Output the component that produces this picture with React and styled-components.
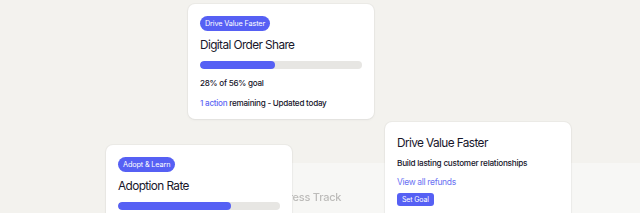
import React from 'react';
import styled, { createGlobalStyle } from 'styled-components';

const GlobalStyle = createGlobalStyle`
  html, body {
    margin: 0;
    padding: 0;
    background: #f3f2ee;
  }
  body {
    font-family: Inter, "Noto Sans", sans-serif;
    color: #1b1a2b;
    -webkit-font-smoothing: antialiased;
  }
`;

const Canvas = styled.div`
  position: relative;
  width: 640px;
  height: 213px;
  overflow: hidden;
  background: #f3f2ee;
`;

const BackPanel = styled.div`
  position: absolute;
  left: 130px;
  top: 163px;
  right: 0;
  height: 80px;
  background: #f7f7f5;
  padding: 27px 0 0 135px;
  box-sizing: border-box;
`;

const BlurTitle = styled.div`
  font-size: 11px;
  font-weight: 500;
  letter-spacing: -0.02em;
  color: #bdbcba;
  filter: blur(0.7px);
`;

const Card = styled.div`
  position: absolute;
  left: ${p => p.$x}px;
  top: ${p => p.$y}px;
  width: ${p => p.$w}px;
  height: ${p => p.$h}px;
  box-sizing: border-box;
  background: #ffffff;
  border-radius: 7px;
  box-shadow: 0 0 0 1px rgba(20, 20, 40, 0.03), 0 1px 3px rgba(20, 20, 40, 0.05);
  padding: ${p => p.$pad};
  display: flex;
  flex-direction: column;
  align-items: flex-start;
`;

const Badge = styled.span`
  display: inline-flex;
  align-items: center;
  height: 15px;
  padding: 0 5px;
  border-radius: 8px;
  background: #5660f4;
  color: #ffffff;
  font-size: 7.3px;
  letter-spacing: -0.02em;
  white-space: nowrap;
`;

const Title = styled.div`
  margin-top: ${p => p.$mt}px;
  font-size: 11.8px;
  font-weight: 400;
  letter-spacing: -0.05em;
  line-height: 16px;
  color: #17162a;
  white-space: nowrap;
`;

const Track = styled.div`
  margin-top: ${p => p.$mt}px;
  width: 100%;
  height: 8px;
  border-radius: 4px;
  background: #e7e6e3;
  overflow: hidden;
`;

const Fill = styled.div`
  height: 100%;
  border-radius: 4px;
  background: #5660f4;
`;

const Body = styled.div`
  margin-top: ${p => p.$mt}px;
  font-size: ${p => (p.$strong ? 8.2 : 8.1)}px;
  line-height: 12px;
  letter-spacing: -0.03em;
  font-weight: ${p => (p.$strong ? 500 : 450)};
  color: #15142a;
  white-space: nowrap;
`;

const Link = styled.span`
  color: #5d66f4;
`;

const LinkLine = styled.div`
  margin-top: ${p => p.$mt}px;
  font-size: 8.5px;
  line-height: 12px;
  letter-spacing: -0.04em;
  color: #6a71f3;
`;

const Button = styled.button`
  margin-top: 5px;
  height: 13px;
  padding: 0 5px;
  border: none;
  border-radius: 3px;
  background: #5660f4;
  color: #ffffff;
  font-family: inherit;
  font-size: 7px;
  letter-spacing: -0.02em;
  line-height: 13px;
`;

const ProgressCard = ({ x, y, h, badge, title, pct, detail, footer }) => (
  <Card $x={x} $y={y} $w={186} $h={h} $pad="12px 12px 0 12px">
    <Badge>{badge}</Badge>
    <Title $mt={6}>{title}</Title>
    <Track $mt={8}>
      <Fill style={{ width: `${pct}%` }} />
    </Track>
    {detail && <Body $mt={8}>{detail}</Body>}
    {footer && <Body $mt={8}>{footer}</Body>}
  </Card>
);

export default function App() {
  return (
    <>
      <GlobalStyle />
      <Canvas>
        <BackPanel>
          <BlurTitle>Progress Track</BlurTitle>
        </BackPanel>
        <ProgressCard
          x={188}
          y={4}
          h={115}
          badge="Drive Value Faster"
          title="Digital Order Share"
          pct={46}
          detail="28% of 56% goal"
          footer={<><Link>1 action</Link> remaining - Updated today</>}
        />
        <ProgressCard
          x={106}
          y={145}
          h={90}
          badge="Adopt & Learn"
          title="Adoption Rate"
          pct={70}
        />
        <Card $x={385} $y={122} $w={186} $h={110} $pad="13px 12px 0 12px">
          <Title $mt={0}>Drive Value Faster</Title>
          <Body $mt={6} $strong>Build lasting customer relationships</Body>
          <LinkLine $mt={7}>View all refunds</LinkLine>
          <Button>Set Goal</Button>
        </Card>
      </Canvas>
    </>
  );
}
